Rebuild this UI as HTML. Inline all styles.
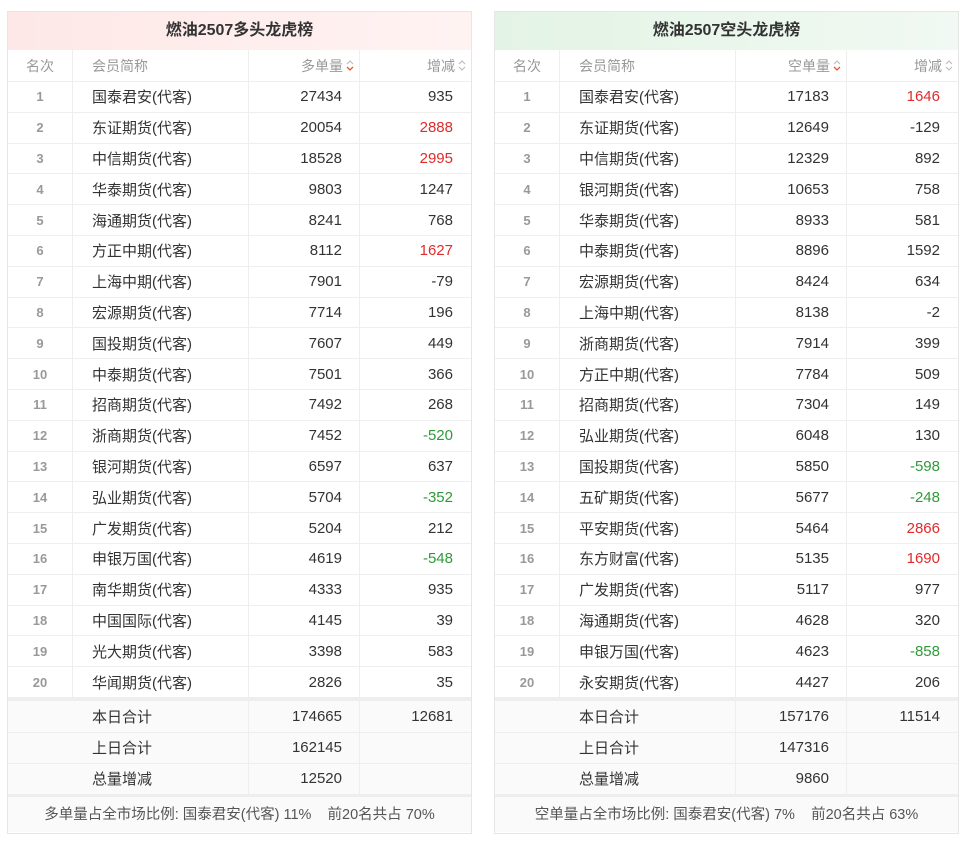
<!DOCTYPE html>
<html><head><meta charset="utf-8"><style>
*{box-sizing:border-box;margin:0;padding:0}
body{width:967px;height:845px;background:#fff;font-family:"Liberation Sans","Noto Sans CJK SC",sans-serif;position:relative;overflow:hidden}
.p{position:absolute;top:11px;width:465px;height:823px;border:1px solid #e6e6e6;background:#fff}
.t{height:38px;line-height:38px;text-align:center;font-weight:bold;font-size:16px;color:#333}
.r{display:flex;height:30.8px;border-top:1px solid #eee;font-size:15px;color:#333;align-items:center}
.r>div{height:100%;display:flex;align-items:center}
.c1{width:65px;justify-content:center;border-right:1px solid #eee;color:#999;font-weight:bold;font-size:13px}
.c2{width:176px;padding-left:19px;border-right:1px solid #eee}
.c3{width:111px;justify-content:flex-end;padding-right:17px;border-right:1px solid #eee}
.c4{flex:1;justify-content:flex-end;padding-right:18px}
.h{height:31px;border-top:none;color:#999;font-size:14px}
.h .c1{font-weight:normal;font-size:14px}
.h .c3,.h .c4{padding-right:5px}
.h svg{margin-left:3px}
.red{color:#e02b2b}.grn{color:#2f9a3a}
.gap{height:4px;background:#eee}
.s{background:#fafafa;height:31px}
.s .c1{border-right:none}
.f{border-top:3px solid #eee;height:38px;line-height:36px;text-align:center;font-size:14.5px;color:#555;background:#fafafa}
</style></head><body>
<div class="p" style="left:7px">
<div class="t" style="background:linear-gradient(90deg,#fde8e7,#fff3f2)">燃油2507多头龙虎榜</div>
<div class="r h"><div class="c1">名次</div><div class="c2">会员简称</div><div class="c3">多单量<svg width="8" height="13" viewBox="0 0 8 13"><path d="M1 5L4 2L7 5" fill="none" stroke="#bbb" stroke-width="1.1"/><path d="M1 8L4 11L7 8" fill="none" stroke="#e8572b" stroke-width="1.3"/></svg></div><div class="c4">增减<svg width="8" height="13" viewBox="0 0 8 13"><path d="M1 5L4 2L7 5M1 8L4 11L7 8" fill="none" stroke="#bbb" stroke-width="1.1"/></svg></div></div>
<div class="r"><div class="c1">1</div><div class="c2">国泰君安(代客)</div><div class="c3">27434</div><div class="c4">935</div></div>
<div class="r"><div class="c1">2</div><div class="c2">东证期货(代客)</div><div class="c3">20054</div><div class="c4 red">2888</div></div>
<div class="r"><div class="c1">3</div><div class="c2">中信期货(代客)</div><div class="c3">18528</div><div class="c4 red">2995</div></div>
<div class="r"><div class="c1">4</div><div class="c2">华泰期货(代客)</div><div class="c3">9803</div><div class="c4">1247</div></div>
<div class="r"><div class="c1">5</div><div class="c2">海通期货(代客)</div><div class="c3">8241</div><div class="c4">768</div></div>
<div class="r"><div class="c1">6</div><div class="c2">方正中期(代客)</div><div class="c3">8112</div><div class="c4 red">1627</div></div>
<div class="r"><div class="c1">7</div><div class="c2">上海中期(代客)</div><div class="c3">7901</div><div class="c4">-79</div></div>
<div class="r"><div class="c1">8</div><div class="c2">宏源期货(代客)</div><div class="c3">7714</div><div class="c4">196</div></div>
<div class="r"><div class="c1">9</div><div class="c2">国投期货(代客)</div><div class="c3">7607</div><div class="c4">449</div></div>
<div class="r"><div class="c1">10</div><div class="c2">中泰期货(代客)</div><div class="c3">7501</div><div class="c4">366</div></div>
<div class="r"><div class="c1">11</div><div class="c2">招商期货(代客)</div><div class="c3">7492</div><div class="c4">268</div></div>
<div class="r"><div class="c1">12</div><div class="c2">浙商期货(代客)</div><div class="c3">7452</div><div class="c4 grn">-520</div></div>
<div class="r"><div class="c1">13</div><div class="c2">银河期货(代客)</div><div class="c3">6597</div><div class="c4">637</div></div>
<div class="r"><div class="c1">14</div><div class="c2">弘业期货(代客)</div><div class="c3">5704</div><div class="c4 grn">-352</div></div>
<div class="r"><div class="c1">15</div><div class="c2">广发期货(代客)</div><div class="c3">5204</div><div class="c4">212</div></div>
<div class="r"><div class="c1">16</div><div class="c2">申银万国(代客)</div><div class="c3">4619</div><div class="c4 grn">-548</div></div>
<div class="r"><div class="c1">17</div><div class="c2">南华期货(代客)</div><div class="c3">4333</div><div class="c4">935</div></div>
<div class="r"><div class="c1">18</div><div class="c2">中国国际(代客)</div><div class="c3">4145</div><div class="c4">39</div></div>
<div class="r"><div class="c1">19</div><div class="c2">光大期货(代客)</div><div class="c3">3398</div><div class="c4">583</div></div>
<div class="r"><div class="c1">20</div><div class="c2">华闻期货(代客)</div><div class="c3">2826</div><div class="c4">35</div></div>
<div class="gap"></div>
<div class="r s" style="border-top:none"><div class="c1"></div><div class="c2">本日合计</div><div class="c3">174665</div><div class="c4">12681</div></div>
<div class="r s"><div class="c1"></div><div class="c2">上日合计</div><div class="c3">162145</div><div class="c4"></div></div>
<div class="r s"><div class="c1"></div><div class="c2">总量增减</div><div class="c3">12520</div><div class="c4"></div></div>
<div class="f">多单量占全市场比例: 国泰君安(代客) 11% &nbsp;&nbsp; 前20名共占 70%</div>
</div>

<div class="p" style="left:494px">
<div class="t" style="background:linear-gradient(90deg,#e3f3e5,#f1f9f2)">燃油2507空头龙虎榜</div>
<div class="r h"><div class="c1">名次</div><div class="c2">会员简称</div><div class="c3">空单量<svg width="8" height="13" viewBox="0 0 8 13"><path d="M1 5L4 2L7 5" fill="none" stroke="#bbb" stroke-width="1.1"/><path d="M1 8L4 11L7 8" fill="none" stroke="#e8572b" stroke-width="1.3"/></svg></div><div class="c4">增减<svg width="8" height="13" viewBox="0 0 8 13"><path d="M1 5L4 2L7 5M1 8L4 11L7 8" fill="none" stroke="#bbb" stroke-width="1.1"/></svg></div></div>
<div class="r"><div class="c1">1</div><div class="c2">国泰君安(代客)</div><div class="c3">17183</div><div class="c4 red">1646</div></div>
<div class="r"><div class="c1">2</div><div class="c2">东证期货(代客)</div><div class="c3">12649</div><div class="c4">-129</div></div>
<div class="r"><div class="c1">3</div><div class="c2">中信期货(代客)</div><div class="c3">12329</div><div class="c4">892</div></div>
<div class="r"><div class="c1">4</div><div class="c2">银河期货(代客)</div><div class="c3">10653</div><div class="c4">758</div></div>
<div class="r"><div class="c1">5</div><div class="c2">华泰期货(代客)</div><div class="c3">8933</div><div class="c4">581</div></div>
<div class="r"><div class="c1">6</div><div class="c2">中泰期货(代客)</div><div class="c3">8896</div><div class="c4">1592</div></div>
<div class="r"><div class="c1">7</div><div class="c2">宏源期货(代客)</div><div class="c3">8424</div><div class="c4">634</div></div>
<div class="r"><div class="c1">8</div><div class="c2">上海中期(代客)</div><div class="c3">8138</div><div class="c4">-2</div></div>
<div class="r"><div class="c1">9</div><div class="c2">浙商期货(代客)</div><div class="c3">7914</div><div class="c4">399</div></div>
<div class="r"><div class="c1">10</div><div class="c2">方正中期(代客)</div><div class="c3">7784</div><div class="c4">509</div></div>
<div class="r"><div class="c1">11</div><div class="c2">招商期货(代客)</div><div class="c3">7304</div><div class="c4">149</div></div>
<div class="r"><div class="c1">12</div><div class="c2">弘业期货(代客)</div><div class="c3">6048</div><div class="c4">130</div></div>
<div class="r"><div class="c1">13</div><div class="c2">国投期货(代客)</div><div class="c3">5850</div><div class="c4 grn">-598</div></div>
<div class="r"><div class="c1">14</div><div class="c2">五矿期货(代客)</div><div class="c3">5677</div><div class="c4 grn">-248</div></div>
<div class="r"><div class="c1">15</div><div class="c2">平安期货(代客)</div><div class="c3">5464</div><div class="c4 red">2866</div></div>
<div class="r"><div class="c1">16</div><div class="c2">东方财富(代客)</div><div class="c3">5135</div><div class="c4 red">1690</div></div>
<div class="r"><div class="c1">17</div><div class="c2">广发期货(代客)</div><div class="c3">5117</div><div class="c4">977</div></div>
<div class="r"><div class="c1">18</div><div class="c2">海通期货(代客)</div><div class="c3">4628</div><div class="c4">320</div></div>
<div class="r"><div class="c1">19</div><div class="c2">申银万国(代客)</div><div class="c3">4623</div><div class="c4 grn">-858</div></div>
<div class="r"><div class="c1">20</div><div class="c2">永安期货(代客)</div><div class="c3">4427</div><div class="c4">206</div></div>
<div class="gap"></div>
<div class="r s" style="border-top:none"><div class="c1"></div><div class="c2">本日合计</div><div class="c3">157176</div><div class="c4">11514</div></div>
<div class="r s"><div class="c1"></div><div class="c2">上日合计</div><div class="c3">147316</div><div class="c4"></div></div>
<div class="r s"><div class="c1"></div><div class="c2">总量增减</div><div class="c3">9860</div><div class="c4"></div></div>
<div class="f">空单量占全市场比例: 国泰君安(代客) 7% &nbsp;&nbsp; 前20名共占 63%</div>
</div>
</body></html>
